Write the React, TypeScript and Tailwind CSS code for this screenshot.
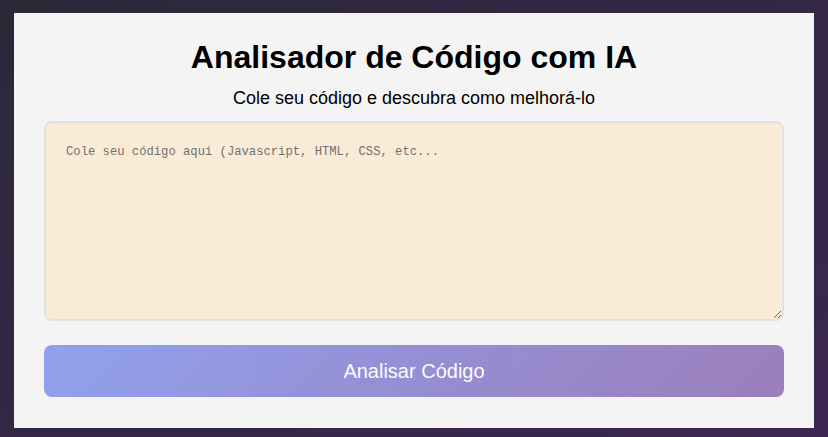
import { useState } from 'react';

export default function App() {
  const [code, setCode] = useState('');

  return (
    <div className="min-h-[437px] w-full bg-gradient-to-br from-[#2b2838] to-[#3c2652] px-[14px] pt-[13px] pb-[9px]">
      <div className="bg-[#f4f4f5] px-[30px] pt-[26px] pb-[31px] flex flex-col items-center font-['Liberation_Sans',Arial,sans-serif]">
        <h1 className="text-[32px] leading-[37px] font-bold text-black">Analisador de Código com IA</h1>
        <p className="text-[18px] leading-[21px] text-black mt-[12px] mb-[12px]">Cole seu código e descubra como melhorá-lo</p>

        {/* Code input */}
        <textarea
          value={code}
          onChange={(e) => setCode(e.target.value)}
          placeholder="Cole seu código aqui (Javascript, HTML, CSS, etc..."
          className="w-full h-[200px] bg-[#faebd7] border-2 border-[#e2e2e2] rounded-lg px-5 pt-5 pb-4 font-['Liberation_Mono',monospace] text-[12.2px] text-gray-800 placeholder:text-[#707070] outline-none"
        ></textarea>

        <button
          disabled={!code}
          className="mt-6 w-full h-[52px] rounded-lg bg-[linear-gradient(135deg,#667eea_0%,#764ba2_100%)] opacity-70 text-white text-[20px]"
        >
          Analisar Código
        </button>
      </div>
    </div>
  );
}
